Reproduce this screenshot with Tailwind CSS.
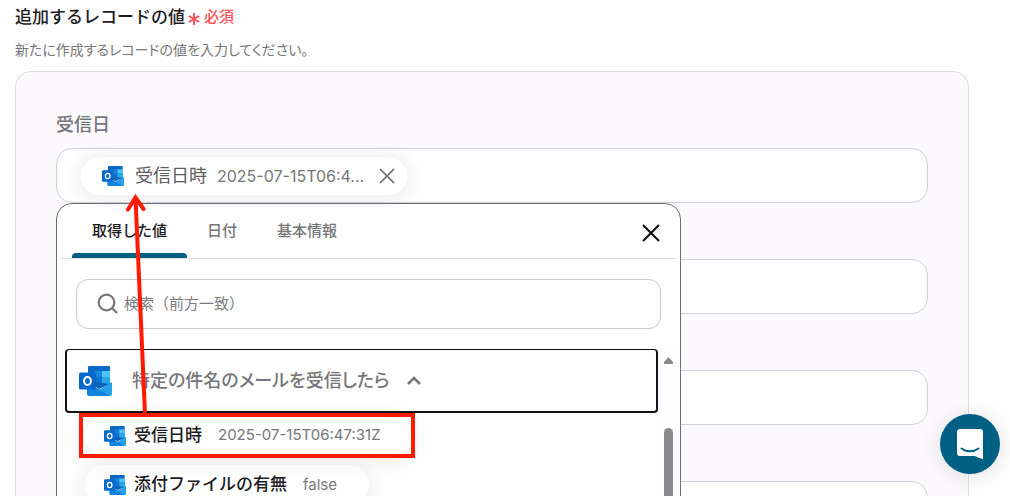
<!DOCTYPE html>
<html lang="ja">
<head>
<meta charset="utf-8">
<meta name="viewport" content="width=device-width, initial-scale=1">
<title>追加するレコードの値</title>
<script src="https://cdn.jsdelivr.net/npm/@tailwindcss/browser@4"></script>
</head>
<body class="relative h-screen overflow-hidden bg-[#fefefe] font-[Inter,'Noto_Sans_CJK_JP',sans-serif] text-[#77767a]">
<svg class="hidden" aria-hidden="true">
  <symbol id="outlook" viewBox="0 0 33 30">
    <path fill="#0b68c8" d="M10 0h20a1 1 0 0 1 1 1v18H9V1a1 1 0 0 1 1-1Z"/>
    <path fill="#1784d9" d="M16 5h7v6h-7z"/>
    <path fill="#4cc4f5" d="M23 5h8v6h-8z"/>
    <path fill="#0f74d0" d="M16 11h7v6h-7z"/>
    <path fill="#28a8ea" d="M23 11h8v7h-8z"/>
    <path fill="#0c62b8" d="M8 15 23 17 31 18 20 23Z"/>
    <path fill="#2a9fea" d="M33 16v12a2 2 0 0 1-2 2H9.500L33 16Z"/>
    <path fill="#1284e0" d="M8 16v12a2 2 0 0 0 2 2h21L8 16Z"/>
    <rect x="0" y="6.500" width="17" height="17" rx="1.500" fill="#0868cc"/>
    <ellipse cx="8.500" cy="15" rx="3.400" ry="3.900" fill="none" stroke="#fff" stroke-width="2"/>
  </symbol>
</svg>

<main class="ml-[15px] mr-[41px] pt-[5px]">
  <header>
    <h1 class="flex items-center gap-[3px] text-[17px] leading-6 font-medium text-[#1c1b1f]">追加するレコードの値
      <span class="flex items-center gap-1 text-[15px] text-[#ff5058]">
        <svg class="mt-1 size-3" viewBox="0 0 12 12" fill="none" stroke="currentColor" stroke-width="2" aria-hidden="true"><path d="M6 0v12M.8 3l10.400 6M11.200 3 .8 9"/></svg>必須</span>
    </h1>
    <p class="mt-[11px] text-[14px] leading-5 [font-feature-settings:'palt']">新たに作成するレコードの値を入力してください。</p>
  </header>

  <section class="mt-[11px] flex flex-col gap-[18px] rounded-2xl border border-[#dedde4] bg-[#fbf9fc] px-10 pt-[39px] pb-10">
    <div class="relative">
      <h2 class="text-[18px] leading-7 font-medium">受信日</h2>
      <div class="mt-[9px] flex h-[55px] items-center rounded-2xl border border-[#d0d3dc] bg-[#fefefe] px-6">
        <div class="flex h-[38px] items-center rounded-full bg-white pr-3 pl-[21px] shadow-[0_3px_16px_4px_rgba(60,40,70,0.07)]">
          <svg class="h-5 w-[22px]" aria-hidden="true"><use href="#outlook"/></svg>
          <span class="ml-[11px] text-[18px] text-[#5d5c60]">受信日時</span>
          <span class="ml-[10px] text-[16px]">2025-07-15T06:4...</span>
          <button type="button" aria-label="値を削除" class="ml-[15px]">
            <svg class="size-4" viewBox="0 0 16 16" fill="none" stroke="#6a696d" stroke-width="1.700" aria-hidden="true"><path d="m1 1 14 14m0-14-14 14"/></svg>
          </button>
        </div>
      </div>

      <div role="dialog" aria-label="値の選択" class="absolute top-full left-0 z-10 h-[500px] w-[625px] max-w-full rounded-t-2xl border border-[#6e6d71] bg-[#fefefe]">
        <div class="mx-1 flex h-[55px] border-b border-[#dedfe2] pl-[11px]">
          <div role="tablist" class="flex text-[15px] font-medium">
            <button type="button" role="tab" aria-selected="true" class="relative px-5 text-[#1c1b1f] after:absolute after:inset-x-0 after:bottom-0 after:h-[5px] after:rounded-t after:bg-[#006083]">取得した値</button>
            <button type="button" role="tab" aria-selected="false" class="px-5">日付</button>
            <button type="button" role="tab" aria-selected="false" class="px-5">基本情報</button>
          </div>
          <button type="button" aria-label="閉じる" class="mt-1 mr-[15px] ml-auto">
            <svg class="size-5" viewBox="0 0 20 20" fill="none" stroke="#0c0c0e" stroke-width="2" aria-hidden="true"><path d="m2 2 16 16m0-16L2 18"/></svg>
          </button>
        </div>

        <label class="mx-[19px] mt-5 flex h-[50px] items-center gap-[5px] rounded-xl border border-[#cacacd] px-5">
          <svg class="size-[22px]" viewBox="0 0 22 22" fill="none" stroke="#77767a" stroke-width="2.200" aria-hidden="true"><circle cx="9.500" cy="9.500" r="7.800"/><path d="m15 15 5 5"/></svg>
          <input type="search" aria-label="検索" placeholder="検索（前方一致）" class="min-w-0 flex-1 bg-transparent text-[15px] outline-none placeholder:text-[#7c7b7f]">
        </label>

        <div class="mt-5 flex">
          <div class="ml-2 min-w-0 flex-1">
            <button type="button" aria-expanded="true" class="flex h-16 w-full items-center rounded border-2 border-t border-[#121214] pl-3 text-[18px] font-medium [font-feature-settings:'palt']">
              <svg class="mr-5 h-[30px] w-[33px]" aria-hidden="true"><use href="#outlook"/></svg>
              特定の件名のメールを受信したら
              <svg class="ml-[17px] h-[9px] w-[14px]" viewBox="0 0 14 9" fill="none" stroke="#77767a" stroke-width="2.600" aria-hidden="true"><path d="m1 8 6-6 6 6"/></svg>
            </button>
            <ul class="pl-5">
              <li class="relative flex h-[45px]">
                <button type="button" class="flex h-10 items-center self-center rounded-full pr-8 pl-[19px] shadow-[0_4px_18px_4px_rgba(60,40,70,0.06)]">
                  <svg class="h-5 w-[22px]" aria-hidden="true"><use href="#outlook"/></svg>
                  <span class="ml-2 text-[17px] font-medium text-[#1c1b1f]">受信日時</span>
                  <span class="ml-4 text-[15px]">2025-07-15T06:47:31Z</span>
                </button>
                <span class="absolute top-0 -left-[6px] h-[45px] w-[336px] border-4 border-[#ff1a00]"></span>
              </li>
              <li class="mt-[7px] flex">
                <button type="button" class="flex h-10 items-center rounded-full pr-8 pl-[19px] shadow-[0_3px_16px_4px_rgba(60,40,70,0.07)]">
                  <svg class="h-5 w-[22px]" aria-hidden="true"><use href="#outlook"/></svg>
                  <span class="ml-2 text-[17px] font-medium text-[#1c1b1f]">添付ファイルの有無</span>
                  <span class="ml-4 text-[15px]">false</span>
                </button>
              </li>
            </ul>
          </div>
          <div class="flex w-[22px] flex-col items-center bg-[#fdfcfe] pt-2 pr-0.5" aria-hidden="true">
            <svg class="h-[7px] w-[9px]" viewBox="0 0 9 7" fill="#8b898c"><path d="M4.500 0 9 5v2H0V5Z"/></svg>
            <span class="mt-16 h-[200px] w-[9px] rounded-full bg-[#8b898c]"></span>
          </div>
        </div>
      </div>
    </div>

    <div class="pt-[38px]"><input type="text" aria-label="値 2" class="block h-[55px] w-full rounded-2xl border border-[#d0d3dc] bg-[#fefefe] px-6"></div>
    <div class="pt-[38px]"><input type="text" aria-label="値 3" class="block h-[55px] w-full rounded-2xl border border-[#d0d3dc] bg-[#fefefe] px-6"></div>
    <div class="pt-[38px]"><input type="text" aria-label="値 4" class="block h-[55px] w-full rounded-2xl border border-[#d0d3dc] bg-[#fefefe] px-6"></div>
  </section>
</main>

<svg class="pointer-events-none absolute top-[194px] left-[125px] z-20 h-[222px] w-6" viewBox="0 0 24 222" fill="none" stroke="#ff1a00" stroke-width="4" aria-hidden="true"><path d="m20 220-9.500-216"/><path d="m3 15.500 7.500-12 8 11.500" stroke-linecap="round"/></svg>

<button type="button" aria-label="チャットを開く" class="absolute right-[10px] bottom-[22px] z-20 grid size-[60px] place-items-center rounded-full bg-[#006083] shadow-[0_2px_20px_rgba(0,0,0,0.12)]">
  <svg class="h-[30px] w-[26px]" viewBox="0 0 26 30" aria-hidden="true"><path fill="#fff" d="M3 0h20a3 3 0 0 1 3 3v27c-3-.7-5-1.700-8-3H3a3 3 0 0 1-3-3V3a3 3 0 0 1 3-3Z"/><path fill="none" stroke="#006083" stroke-width="2" stroke-linecap="round" d="M4.500 19.500c5 3.800 12 3.800 17 0"/></svg>
</button>
</body>
</html>
